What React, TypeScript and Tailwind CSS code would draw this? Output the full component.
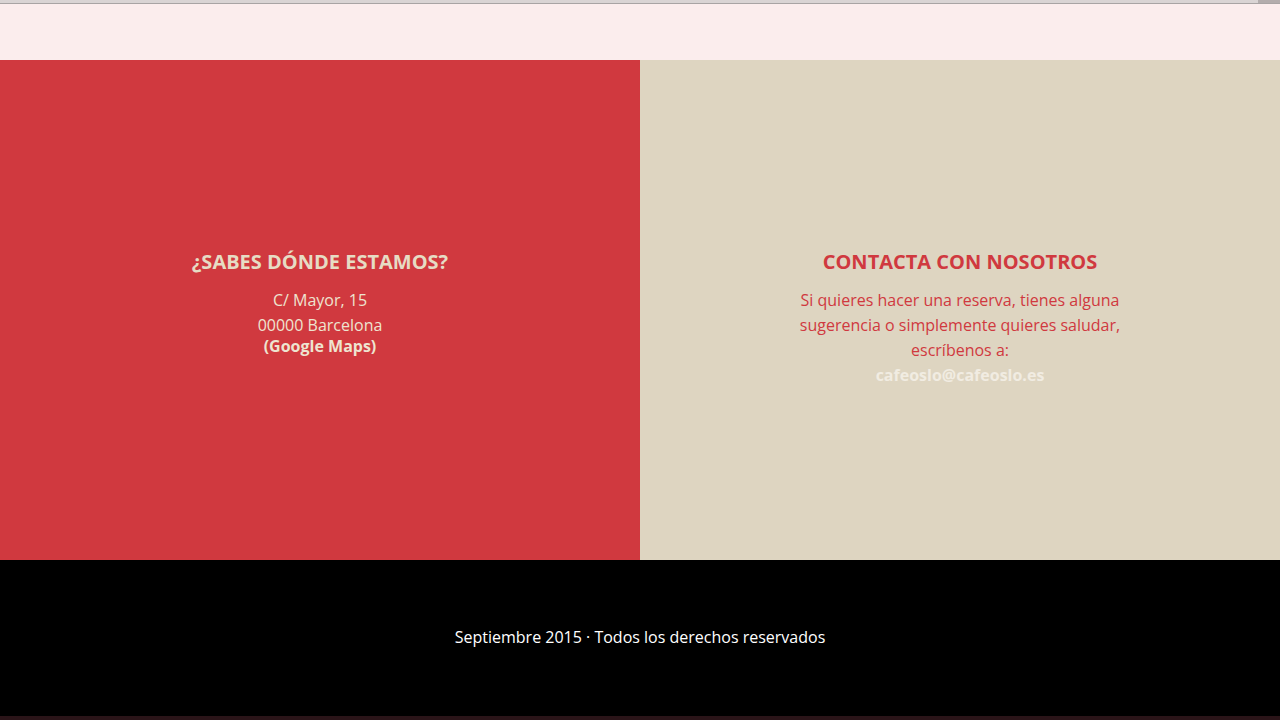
export default function App() {
  return (
    <div className="flex h-[720px] w-[1280px] flex-col overflow-hidden bg-black font-['Open_Sans',sans-serif]">
      <div className="flex h-[4px] shrink-0 border-b border-[#a8a4a4] bg-[#d9d4d4]">
        <div className="flex-1" />
        <div className="w-[22px] bg-[#b3adad]" />
      </div>
      <div className="h-[56px] shrink-0 bg-[#fbeded]" />

      <div className="grid h-[500px] shrink-0 grid-cols-2">
        <section className="flex flex-col items-center bg-[#d0393f] pt-[190px] text-center">
          <h2 className="text-[20px] font-bold uppercase leading-[24px] text-[#e6dcc4]">¿Sabes dónde estamos?</h2>
          <p className="mt-[14px] text-[16px] leading-[25px] text-[#eee4d0]">
            C/ Mayor, 15
            <br />
            00000 Barcelona
          </p>
          <a className="text-[16px] font-bold leading-[17px] text-[#eee4d0]">(Google Maps)</a>
        </section>

        <section className="flex flex-col items-center bg-[#ded5c1] pt-[190px] text-center">
          <h2 className="text-[20px] font-bold uppercase leading-[24px] text-[#d0393f]">Contacta con nosotros</h2>
          <p className="mt-[14px] w-[340px] text-[16px] leading-[25px] text-[#d0393f]">
            Si quieres hacer una reserva, tienes alguna sugerencia o simplemente quieres saludar, escríbenos a:
          </p>
          <a className="text-[16px] font-bold leading-[25px] text-[#f1ece2]">cafeoslo@cafeoslo.es</a>
        </section>
      </div>

      <footer className="flex h-[156px] shrink-0 items-center justify-center bg-black pb-[3px] pt-[1px]">
        <p className="text-[16px] text-white">Septiembre 2015 · Todos los derechos reservados</p>
      </footer>
      <div className="h-[4px] shrink-0 bg-[#2a1418]" />
    </div>
  )
}
